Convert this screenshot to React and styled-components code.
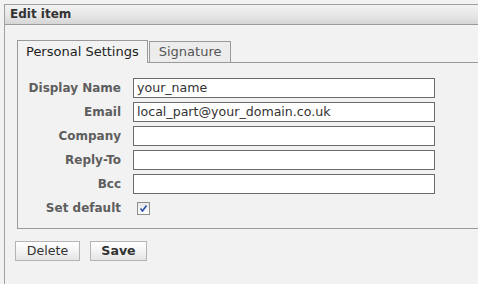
import { Fragment } from 'react'
import styled, { createGlobalStyle } from 'styled-components'

const Global = createGlobalStyle`
  html, body {
    margin: 0;
    background: #f2f2f2;
  }
  body {
    font-family: "DejaVu Sans", Verdana, sans-serif;
    color: #333;
  }
`

const Page = styled.div`
  width: 478px;
  height: 284px;
  padding: 4px 0 0 4px;
  box-sizing: border-box;
  overflow: hidden;
`

const Panel = styled.div`
  height: 100%;
  border-left: 1px solid #a0a0a0;
  border-top: 1px solid #a0a0a0;
  background: #f2f2f2;
`

const Header = styled.div`
  height: 19px;
  line-height: 19px;
  padding-left: 5px;
  font-size: 12px;
  font-weight: bold;
  color: #333;
  background: linear-gradient(#f3f3f3, #e6e6e6 55%, #d6d6d6);
  border-bottom: 1px solid #9a9a9a;
`

const Body = styled.div`
  padding: 15px 0 0 12px;
`

const TabRow = styled.div`
  display: flex;
  align-items: flex-end;
`

const Tab = styled.div`
  height: ${p => (p.active ? '22px' : '20px')};
  line-height: ${p => (p.active ? '22px' : '20px')};
  padding: 0 ${p => (p.active ? '8px' : '9px')};
  font-size: 13px;
  color: ${p => (p.active ? '#222' : '#555')};
  background: ${p => (p.active ? '#f2f2f2' : '#ececec')};
  border: 1px solid #9a9a9a;
  border-bottom: none;
  margin-right: 1px;
  margin-bottom: ${p => (p.active ? '-1px' : '0')};
  position: relative;
  z-index: ${p => (p.active ? 1 : 0)};
`

const TabPanel = styled.div`
  border-top: 1px solid #9a9a9a;
  border-left: 1px solid #9a9a9a;
  border-bottom: 1px solid #9a9a9a;
  padding: 15px 0 10px 0;
`

const Form = styled.div`
  display: grid;
  grid-template-columns: 103px 302px;
  column-gap: 12px;
  row-gap: 4px;
`

const Label = styled.div`
  text-align: right;
  font-size: 12px;
  font-weight: bold;
  color: #5e5e5e;
  height: 20px;
  line-height: 20px;
`

const Input = styled.div`
  height: 18px;
  line-height: 18px;
  border: 1px solid #6a6a6a;
  background: #fff;
  padding-left: 3px;
  font-size: 12.6px;
  color: #333;
`

const CheckCell = styled.div`
  height: 20px;
  display: flex;
  align-items: center;
  padding-left: 4px;
`

const Check = styled.span`
  width: 11px;
  height: 11px;
  border: 1px solid #8d8d8d;
  background: linear-gradient(#e6e6e6, #ffffff);
  display: flex;
  align-items: center;
  justify-content: center;
`

const Buttons = styled.div`
  display: flex;
  gap: 10px;
  padding: 12px 0 0 10px;
`

const Button = styled.div`
  width: ${p => p.w}px;
  height: 18px;
  line-height: 18px;
  box-sizing: content-box;
  text-align: center;
  font-size: 12.6px;
  font-weight: ${p => (p.bold ? 'bold' : 'normal')};
  color: #333;
  border: 1px solid #b4b4b4;
  background: linear-gradient(#ffffff, #f4f4f4 50%, #e4e4e4);
`

const rows = [
  ['Display Name', 'your_name'],
  ['Email', 'local_part@your_domain.co.uk'],
  ['Company', ''],
  ['Reply-To', ''],
  ['Bcc', ''],
]

export default function App() {
  return (
    <Page>
      <Global />
      <Panel>
        <Header>Edit item</Header>
        <Body>
          <TabRow>
            <Tab active>Personal Settings</Tab>
            <Tab>Signature</Tab>
          </TabRow>
          <TabPanel>
            <Form>
              {rows.map(([label, value]) => (
                <Fragment key={label}>
                  <Label>{label}</Label>
                  <Input>{value}</Input>
                </Fragment>
              ))}
              <Label>Set default</Label>
              <CheckCell>
                <Check>
                  <svg width="9" height="9" viewBox="0 0 9 9">
                    <path d="M1.5 4.5 L3.5 7 L7.5 1.5" fill="none" stroke="#2a4fa8" strokeWidth="1.6" />
                  </svg>
                </Check>
              </CheckCell>
            </Form>
          </TabPanel>
          <Buttons style={{ marginLeft: '-12px' }}>
            <Button w={63}>Delete</Button>
            <Button w={55} bold>Save</Button>
          </Buttons>
        </Body>
      </Panel>
    </Page>
  )
}
